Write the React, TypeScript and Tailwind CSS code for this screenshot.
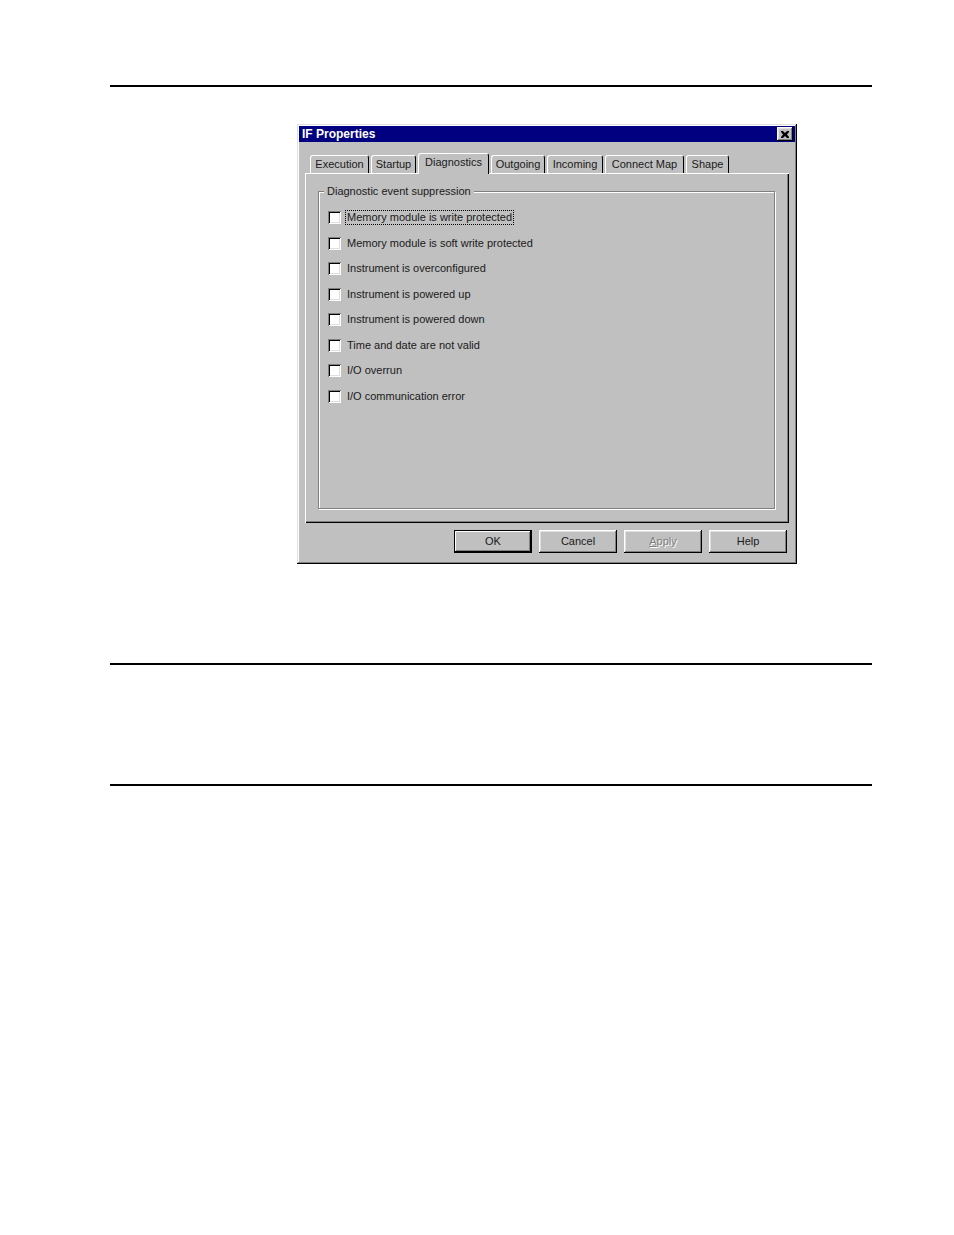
import React from 'react';

const raised = 'shadow-[inset_-1px_-1px_0_#000,inset_1px_1px_0_#fff,inset_-2px_-2px_0_#808080,inset_2px_2px_0_#dfdfdf]';

const tabs = [
  { label: 'Execution', w: 'w-[59px]' },
  { label: 'Startup', w: 'w-[45px]' },
  { label: 'Diagnostics', w: 'w-[71px]' },
  { label: 'Outgoing', w: 'w-[54px]' },
  { label: 'Incoming', w: 'w-[56px]' },
  { label: 'Connect Map', w: 'w-[79px]' },
  { label: 'Shape', w: 'w-[43px]' },
];

const options = [
  'Memory module is write protected',
  'Memory module is soft write protected',
  'Instrument is overconfigured',
  'Instrument is powered up',
  'Instrument is powered down',
  'Time and date are not valid',
  'I/O overrun',
  'I/O communication error',
];

function Checkbox() {
  return (
    <span className="w-[13px] h-[13px] bg-white shrink-0 shadow-[inset_1px_1px_0_#808080,inset_-1px_-1px_0_#fff,inset_2px_2px_0_#000,inset_-2px_-2px_0_#dfdfdf]" />
  );
}

function Tab({ label, w, active }: { label: string; w: string; active: boolean }) {
  return (
    <div
      className={`relative ${w} text-center leading-[16px] rounded-t-[3px] border-t border-l border-white border-r border-r-black ${
        active ? 'h-[21px] z-10 bg-[#c0c0c0] -mb-[1px]' : 'h-[18px]'
      }`}
    >
      {label}
    </div>
  );
}

function Button({ label, disabled, def }: { label: string; disabled?: boolean; def?: boolean }) {
  return (
    <div
      className={`w-[78px] h-[23px] flex items-center justify-center ${
        def ? 'border border-black shadow-[inset_-1px_-1px_0_#000,inset_1px_1px_0_#fff,inset_-2px_-2px_0_#808080]' : raised
      }`}
    >
      {disabled ? (
        <span className="text-[#808080] [text-shadow:1px_1px_0_#fff]">
          <span className="underline">A</span>pply
        </span>
      ) : (
        <span>{label}</span>
      )}
    </div>
  );
}

export default function App() {
  return (
    <div className="w-[954px] h-[1235px] bg-white relative font-['Liberation_Sans',Arial,sans-serif] text-black">
      <div className="pt-[85px]">
        <div className="ml-[110px] w-[762px] h-[2px] bg-black" />
      </div>

      {/* Dialog */}
      <div className="mt-[37px] ml-[297px] w-[500px] h-[440px] bg-[#c0c0c0] shadow-[inset_-1px_-1px_0_#000,inset_1px_1px_0_#dfdfdf,inset_-2px_-2px_0_#808080,inset_2px_2px_0_#fff] p-[2px] flex flex-col text-[11px] text-[#1a1a1a]">
        {/* Title bar */}
        <div className="h-[16px] bg-[#000080] flex items-center justify-between pl-[3px] pr-[2px]">
          <span className="text-white font-bold text-[12px]">IF Properties</span>
          <div className={`w-[16px] h-[14px] bg-[#c0c0c0] ${raised} flex items-center justify-center`}>
            <svg width="8" height="7" viewBox="0 0 8 7">
              <path d="M0 0h2l2 2 2-2h2v1L6 3.5 8 6v1H6L4 5 2 7H0V6l2-2.5L0 1z" fill="#000" />
            </svg>
          </div>
        </div>

        {/* Tabs */}
        <div className="flex items-end gap-[2px] pl-[11px] mt-[10px] h-[21px]">
          {tabs.map((t) => (
            <Tab key={t.label} label={t.label} w={t.w} active={t.label === 'Diagnostics'} />
          ))}
        </div>

        {/* Panel */}
        <div className="mx-[6px] h-[350px] shadow-[inset_1px_1px_0_#fff,inset_-1px_-1px_0_#000,inset_-2px_-2px_0_#808080] pt-[18px] pl-[13px] pr-[14px] pb-[14px]">
          <div className="relative h-full border border-[#808080] shadow-[1px_1px_0_#fff,inset_1px_1px_0_#fff]">
            <div className="absolute -top-[8px] left-[5px] px-[3px] bg-[#c0c0c0] leading-[14px]">
              Diagnostic event suppression
            </div>
            <div className="pt-[19px] pl-[9px] flex flex-col gap-[12.5px]">
              {options.map((o, i) => (
                <div key={o} className="flex items-center h-[13px]">
                  <Checkbox />
                  <span
                    className={`ml-[5px] px-[1px] leading-[13px] ${
                      i === 0 ? 'outline outline-1 outline-dotted outline-black' : ''
                    }`}
                  >
                    {o}
                  </span>
                </div>
              ))}
            </div>
          </div>
        </div>

        {/* Buttons */}
        <div className="flex justify-end gap-[7px] pr-[8px] mt-[7px]">
          <Button label="OK" def />
          <Button label="Cancel" />
          <Button label="Apply" disabled />
          <Button label="Help" />
        </div>
      </div>

      <div className="mt-[99px] ml-[110px] w-[762px] h-[1.5px] bg-black" />
      <div className="mt-[119.5px] ml-[110px] w-[762px] h-[1.5px] bg-black" />
    </div>
  );
}
